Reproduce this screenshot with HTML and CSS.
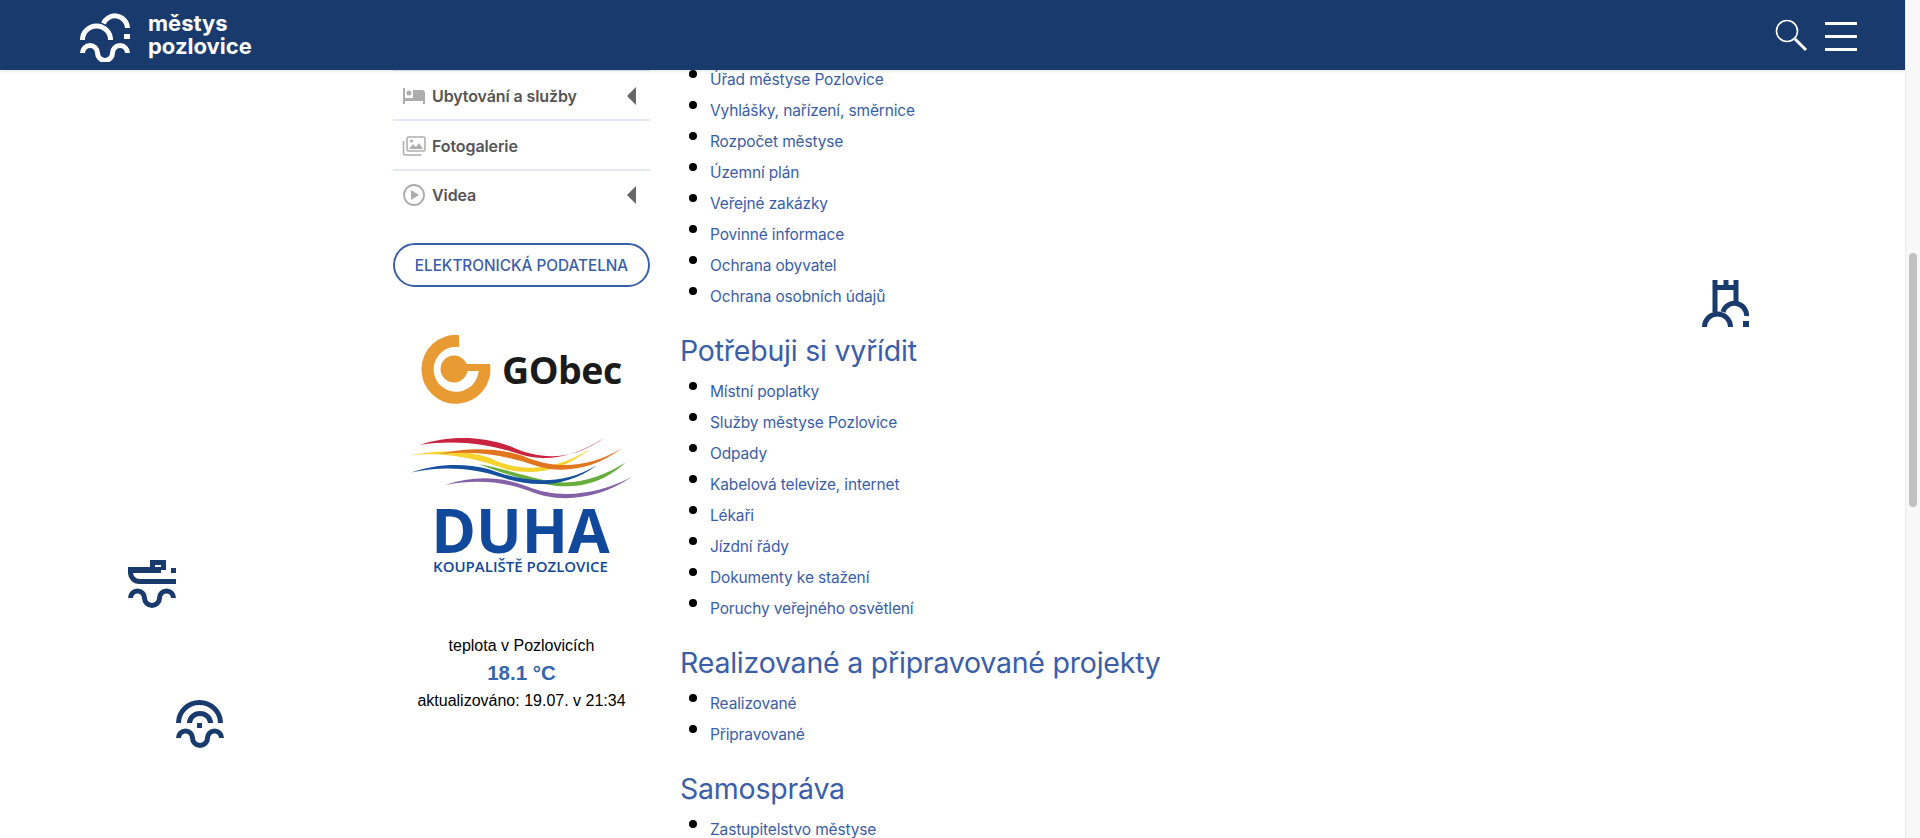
FILE: index.html
```html
<!DOCTYPE html>
<html lang="cs">
<head>
<meta charset="utf-8">
<title>Městys Pozlovice</title>
<link rel="stylesheet" href="styles.css">
</head>
<body>
<div class="viewport">
  <header class="topbar">
    <a class="brand" href="#">
      <svg class="brand-mark" viewBox="0 0 50 50" width="50" height="50" fill="none" stroke="#fff" stroke-width="5">
        <path d="M2.5 28A14 14 0 0 1 30.500 28"/>
        <path d="M23.500 11.500A12.500 12.500 0 0 1 47.500 16"/>
        <path d="M44 22h6v5h-6z" fill="#fff" stroke="none"/>
        <path d="M2.500 41a7.500 7.500 0 0 1 15 0a7.500 7.500 0 0 0 15 0a7.500 7.500 0 0 1 15 0"/>
      </svg>
      <span class="brand-name">městys<br>pozlovice</span>
    </a>
    <div class="tools">
      <svg class="search" viewBox="0 0 36 36" width="36" height="36" fill="none" stroke="#fff">
        <circle cx="13" cy="13" r="10.500" stroke-width="1.600"/>
        <path d="M21 21l11 11" stroke-width="3"/>
      </svg>
      <div class="burger"><span></span><span></span><span></span></div>
    </div>
  </header>

  <main class="layout">
    <aside class="sidebar">
      <nav class="side-nav">
        <a class="side-item" href="#">
          <svg class="side-icon" viewBox="0 0 24 18" width="24" height="18" fill="#adadad"><path d="M1 1h2v10h20v6h-2v-3H3v3H1z"/><circle cx="7" cy="6" r="2.500"/><path d="M11 3h9a3 3 0 0 1 3 3v5H11z"/></svg>
          <span class="side-label">Ubytování a služby</span>
          <span class="caret"></span>
        </a>
        <a class="side-item" href="#">
          <svg class="side-icon" viewBox="0 0 24 20" width="24" height="20" fill="none" stroke="#adadad" stroke-width="1.500"><rect x="5" y="1" width="18" height="14" rx="1.500"/><path d="M1.500 5v12a2 2 0 0 0 2 2h16"/><path d="M7 13l4-5 3 3 3-4 4 6z" fill="#adadad" stroke="none"/><circle cx="9.500" cy="5" r="1.500" fill="#adadad" stroke="none"/></svg>
          <span class="side-label">Fotogalerie</span>
        </a>
        <a class="side-item" href="#">
          <svg class="side-icon" viewBox="0 0 24 22" width="24" height="22" fill="none" stroke="#adadad" stroke-width="1.800"><circle cx="12" cy="11" r="10"/><path d="M9 6l8 5-8 5z" fill="#adadad" stroke="none"/></svg>
          <span class="side-label">Videa</span>
          <span class="caret"></span>
        </a>
      </nav>
      <a class="pill" href="#">ELEKTRONICKÁ PODATELNA</a>

      <div class="gobec">
        <svg class="gobec-mark" viewBox="0 0 70 70" width="70" height="70" fill="#e89a33">
          <path d="M38 0A34.500 34.500 0 1 0 69 29H57A22.500 22.500 0 1 1 38 12z"/>
          <circle cx="33" cy="34" r="13.500"/>
          <path d="M40 29h19v7H40z"/>
        </svg>
        <span class="gobec-name">GObec</span>
      </div>

      <div class="duha">
        <svg class="rainbow" viewBox="60 350 670 190" width="226" height="65">
          <path fill="#f6d32d" d="M60 410C130 395 220 390 300 415C370 450 470 470 600 390C520 455 430 470 350 450C270 420 170 395 60 410Z"/>
          <path fill="#c8233f" d="M95 378C180 350 280 350 370 385C450 420 540 430 645 355C550 415 470 430 390 405C300 375 200 362 95 378Z"/>
          <path fill="#e2761e" d="M150 405C230 385 320 385 400 410C490 450 590 450 695 388C610 450 520 465 440 440C340 405 250 395 150 405Z"/>
          <path fill="#67ad3b" d="M270 435C340 445 430 480 500 488C570 495 640 470 705 430C640 490 570 505 500 500C420 490 340 460 270 435Z"/>
          <path fill="#15509f" d="M70 460C140 435 220 430 300 450C380 480 500 510 620 438C530 505 430 505 340 475C250 445 160 440 70 460Z"/>
          <path fill="#8461a6" d="M170 497C250 470 330 470 410 500C490 535 610 535 725 472C620 545 500 550 420 515C340 485 260 480 170 497Z"/>
        </svg>
        <div class="duha-name">DUHA</div>
        <div class="duha-sub">KOUPALIŠTĚ POZLOVICE</div>
      </div>

      <div class="weather">
        <div>teplota v Pozlovicích</div>
        <div class="temp">18.1 °C</div>
        <div>aktualizováno: 19.07. v 21:34</div>
      </div>
    </aside>

    <section class="content">
      <ul class="links">
        <li><a href="#">Úřad městyse Pozlovice</a></li>
        <li><a href="#">Vyhlášky, nařízení, směrnice</a></li>
        <li><a href="#">Rozpočet městyse</a></li>
        <li><a href="#">Územní plán</a></li>
        <li><a href="#">Veřejné zakázky</a></li>
        <li><a href="#">Povinné informace</a></li>
        <li><a href="#">Ochrana obyvatel</a></li>
        <li><a href="#">Ochrana osobních údajů</a></li>
      </ul>
      <h2>Potřebuji si vyřídit</h2>
      <ul class="links">
        <li><a href="#">Místní poplatky</a></li>
        <li><a href="#">Služby městyse Pozlovice</a></li>
        <li><a href="#">Odpady</a></li>
        <li><a href="#">Kabelová televize, internet</a></li>
        <li><a href="#">Lékaři</a></li>
        <li><a href="#">Jízdní řády</a></li>
        <li><a href="#">Dokumenty ke stažení</a></li>
        <li><a href="#">Poruchy veřejného osvětlení</a></li>
      </ul>
      <h2>Realizované a připravované projekty</h2>
      <ul class="links">
        <li><a href="#">Realizované</a></li>
        <li><a href="#">Připravované</a></li>
      </ul>
      <h2>Samospráva</h2>
      <ul class="links">
        <li><a href="#">Zastupitelstvo městyse</a></li>
      </ul>
    </section>
  </main>

  <svg class="deco deco-ship" viewBox="0 0 48 48" width="48" height="48" fill="none" stroke="#183a6d" stroke-width="5">
    <path d="M0 10H33" stroke-width="6"/>
    <path d="M2.500 8v4a9 9 0 0 0 9 9.500H48"/>
    <path d="M24.500 10V2.500H35.500V10"/>
    <path d="M43 8h5v5h-5z" fill="#183a6d" stroke="none"/>
    <path d="M2.500 38a7 7 0 0 1 14 0a7.500 7.500 0 0 0 15 0a7 7 0 0 1 14 0"/>
  </svg>
  <svg class="deco deco-wifi" viewBox="0 0 48 48" width="48" height="48" fill="none" stroke="#183a6d" stroke-width="5">
    <path d="M2.500 23a21 20.500 0 0 1 42 0"/>
    <path d="M13.500 23a10.500 9.500 0 0 1 21 0"/>
    <path d="M21 23h5v5h-5z" fill="#183a6d" stroke="none"/>
    <path d="M2.500 38a7 7 0 0 1 14 0a7.500 7.500 0 0 0 15 0a7 7 0 0 1 14 0"/>
  </svg>
  <svg class="deco deco-tower" viewBox="0 0 48 48" width="48" height="48" fill="none" stroke="#183a6d" stroke-width="5">
    <path d="M13 32V0M34 22V0"/>
    <path d="M11 7.500h25"/>
    <path d="M21.500 0h5v6h-5z" fill="#183a6d" stroke="none"/>
    <path d="M21 32A12 12 0 0 1 44.500 36"/>
    <path d="M2.500 47A13 13 0 0 1 28.500 47"/>
    <path d="M41 41h6v6h-6z" fill="#183a6d" stroke="none"/>
  </svg>
</div>
<div class="scrollbar"><div class="thumb"></div></div>
</body>
</html>
```
FILE: styles.css
```css
* { box-sizing: border-box; }
html, body { margin: 0; height: 838px; overflow: hidden; }
body { display: flex; background: #fff; font-family: Inter, "Liberation Sans", sans-serif; }
a { text-decoration: none; color: inherit; }

.viewport { position: relative; flex: 1; height: 838px; overflow: hidden; }
.scrollbar { width: 15px; background: #f8f8f8; border-left: 1px solid #ececec; padding: 253px 3px 0 3px; }
.thumb { height: 254px; background: #c1c1c1; border-radius: 4px; }

.topbar { height: 70px; background: #183a6d; box-shadow: 0 1px 3px rgba(0,0,0,.12); display: flex; justify-content: space-between; align-items: center; padding: 0 48px 0 80px; position: relative; z-index: 2; }
.brand { display: flex; align-items: center; gap: 18px; }
.brand-mark { display: block; margin-top: 4px; }
.brand-name { color: #fff; font-weight: 700; font-size: 22px; line-height: 23px; }
.tools { display: flex; align-items: flex-start; gap: 15px; }
.search { display: block; margin-top: 1px; }
.burger { width: 32px; display: flex; flex-direction: column; gap: 10px; margin-top: 5px; }
.burger span { display: block; height: 3px; background: #fff; }

.layout { display: flex; gap: 30px; padding-left: 393px; }
.sidebar { width: 257px; flex: none; }
.side-nav { border-top: 1px solid #e3e8f2; }
.side-item { height: 50px; display: flex; align-items: center; padding: 2px 14px 0 9px; border-bottom: 2px solid #e3e8f2; color: #555; font-weight: 600; font-size: 16px; letter-spacing: -.1px; }
.side-item:last-child { border-bottom: 0; height: 48px; padding-top: 0; }
.side-icon { flex: none; margin-right: 6px; }
.side-label { flex: 1; }
.caret { width: 0; height: 0; border-style: solid; border-width: 9px 9px 9px 0; border-color: transparent #666 transparent transparent; }

.pill { display: flex; align-items: center; justify-content: center; height: 44px; margin-top: 24px; border: 2px solid #3a5ea8; border-radius: 22px; color: #3a5ea8; font-size: 15.300px; font-weight: 500; white-space: nowrap; }

.gobec { display: flex; align-items: center; gap: 11px; margin-top: 48px; padding-left: 28px; height: 70px; }
.gobec-mark { display: block; flex: none; }
.gobec-name { font-family: "Open Sans", sans-serif; font-weight: 700; font-size: 37.500px; color: #1b1b1b; line-height: 1; letter-spacing: -.5px; }

.duha { margin-top: 30px; padding-right: 2px; display: flex; flex-direction: column; align-items: center; color: #10499b; }
.rainbow { display: block; }
.duha-name { font-family: "Open Sans", sans-serif; font-weight: 700; font-size: 60.500px; line-height: 56px; margin-top: 2px; }
.duha-sub { font-family: "Open Sans", sans-serif; font-weight: 600; font-size: 15px; line-height: 20px; margin-top: -2px; }

.weather { margin-top: 56px; text-align: center; font-family: "Liberation Sans", Arial, sans-serif; font-size: 16px; line-height: 27.500px; color: #000; }
.temp { color: #3366aa; font-weight: 700; font-size: 20.500px; line-height: 26px; margin-bottom: 1.500px; }

.content { flex: 1; margin-top: -6px; }
.links { list-style: none; margin: 0; padding: 0 0 0 9px; }
.links li { display: flex; gap: 13px; height: 31px; line-height: 31px; font-size: 15.500px; letter-spacing: -.15px; color: #3a5ea8; }
.links li::before { content: ""; flex: none; width: 8px; height: 8px; border-radius: 50%; background: #000; margin-top: 6px; }
h2 { margin: 19px 0 5px; font-size: 28.500px; font-weight: 400; letter-spacing: -.22px; line-height: 40px; color: #3a5ea8; }

.deco { position: absolute; display: block; }
.deco-ship { left: 128px; top: 560px; }
.deco-wifi { left: 176px; top: 700px; }
.deco-tower { left: 1702px; top: 280px; }
```
